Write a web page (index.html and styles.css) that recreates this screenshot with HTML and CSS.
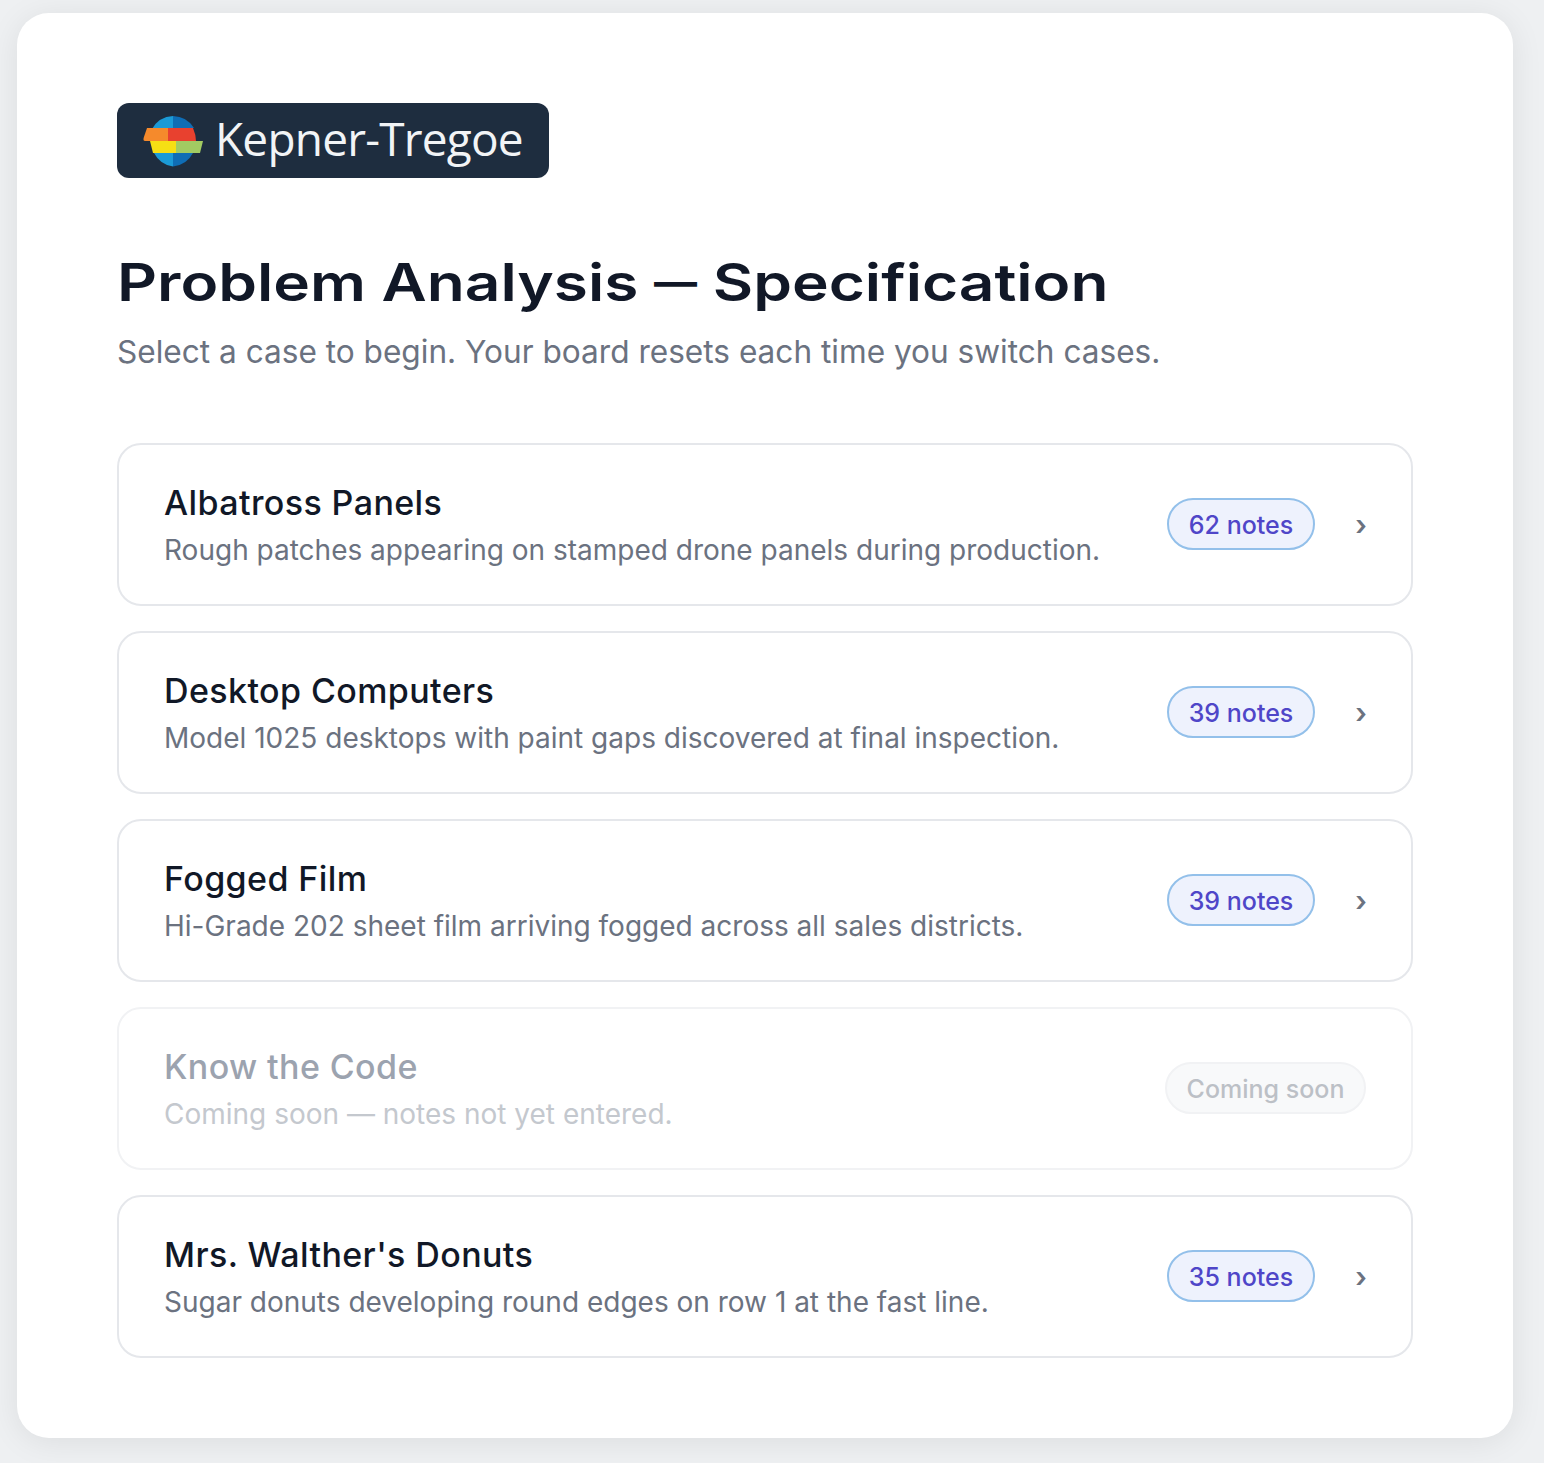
FILE: index.html
```html
<!DOCTYPE html>
<html lang="en">
<head>
    <meta charset="UTF-8">
    <title>Problem Analysis - Specification</title>
    <link rel="stylesheet" href="styles.css">
</head>
<body>
    <main class="panel">
        <div class="logo">
            <svg class="logo-mark" viewBox="0 0 60 52" width="60" height="52">
                <path d="M9 14 A25.5 25.5 0 0 1 30 1 V14 Z" fill="#1b9ad6"/>
                <path d="M30 1 A25.5 25.5 0 0 1 51 13 H30 Z" fill="#0f6db5"/>
                <path d="M11 38 H30 V51.5 A25.5 25.5 0 0 1 11 38 Z" fill="#1b9ad6"/>
                <path d="M30 38 H50 A25.5 25.5 0 0 1 30 51.5 Z" fill="#0f6db5"/>
                <path d="M4 13 H25 V26 H2 Q0 26 0.6 23 Z" fill="#f58a2c"/>
                <path d="M25 13 H50 Q53 20 53 26 H25 Z" fill="#e8412f"/>
                <path d="M7 26 H33 V38 H10 Z" fill="#f6df14"/>
                <path d="M33 26 H60 L57 38 H33 Z" fill="#a2cb62"/>
            </svg>
            <span class="logo-text">Kepner-Tregoe</span>
        </div>

        <h1>Problem Analysis <span class="dash">—</span> Specification</h1>
        <p class="subtitle">Select a case to begin. Your board resets each time you switch cases.</p>

        <div class="cases">
            <div class="case">
                <div class="case-info">
                    <div class="case-title">Albatross Panels</div>
                    <div class="case-desc">Rough patches appearing on stamped drone panels during production.</div>
                </div>
                <span class="badge">62 notes</span>
                <span class="arrow">›</span>
            </div>
            <div class="case">
                <div class="case-info">
                    <div class="case-title">Desktop Computers</div>
                    <div class="case-desc">Model 1025 desktops with paint gaps discovered at final inspection.</div>
                </div>
                <span class="badge">39 notes</span>
                <span class="arrow">›</span>
            </div>
            <div class="case">
                <div class="case-info">
                    <div class="case-title">Fogged Film</div>
                    <div class="case-desc">Hi-Grade 202 sheet film arriving fogged across all sales districts.</div>
                </div>
                <span class="badge">39 notes</span>
                <span class="arrow">›</span>
            </div>
            <div class="case disabled">
                <div class="case-info">
                    <div class="case-title">Know the Code</div>
                    <div class="case-desc">Coming soon — notes not yet entered.</div>
                </div>
                <span class="badge soon">Coming soon</span>
            </div>
            <div class="case">
                <div class="case-info">
                    <div class="case-title">Mrs. Walther's Donuts</div>
                    <div class="case-desc">Sugar donuts developing round edges on row 1 at the fast line.</div>
                </div>
                <span class="badge">35 notes</span>
                <span class="arrow">›</span>
            </div>
        </div>
    </main>
</body>
</html>
```

FILE: styles.css
```css
* {
    margin: 0;
    padding: 0;
    box-sizing: border-box;
}

html,
body {
    height: 100%;
    overflow: hidden;
}

body {
    background: #eef0f2;
    font-family: Inter, "Noto Sans", sans-serif;
    padding: 13px 31px 25px 17px;
}

.panel {
    height: 1425px;
    padding: 90px 100px 0;
    background: #fff;
    border-radius: 32px;
    box-shadow: 0 4px 32px rgba(0, 0, 0, 0.08);
}

.logo {
    display: flex;
    align-items: center;
    width: 432px;
    height: 75px;
    padding-left: 26px;
    gap: 12px;
    background: #1e2d3f;
    border-radius: 12px;
}

.logo-mark {
    flex-shrink: 0;
}

.logo-text {
    padding-bottom: 6px;
    color: #f2f4f6;
    font-family: "Open Sans", sans-serif;
    font-size: 46px;
    letter-spacing: -0.8px;
    white-space: nowrap;
}

h1 {
    width: fit-content;
    height: 64px;
    margin-top: 72px;
    font-size: 52px;
    font-weight: 600;
    line-height: 64px;
    color: #111827;
    white-space: nowrap;
    transform: scaleX(1.195);
    transform-origin: left;
}

.dash {
    font-size: 36px;
    font-weight: 800;
    vertical-align: 6px;
}

.subtitle {
    margin-top: 17px;
    font-size: 31.6px;
    line-height: 42px;
    color: #6b7280;
    white-space: nowrap;
}

.cases {
    display: flex;
    flex-direction: column;
    gap: 25px;
    margin-top: 70px;
}

.case {
    display: flex;
    align-items: center;
    height: 163px;
    padding: 0 46px 0 45px;
    background: #fff;
    border: 2px solid #e5e7eb;
    border-radius: 24px;
}

.case-info {
    flex-grow: 1;
    padding: 1px 0 0;
}

.case-title {
    font-size: 34px;
    font-weight: 500;
    line-height: 44px;
    letter-spacing: 0.4px;
    color: #111827;
}

.case-desc {
    margin-top: 5px;
    font-size: 28px;
    line-height: 40px;
    color: #6b7280;
    white-space: nowrap;
}

.badge {
    display: flex;
    align-items: center;
    justify-content: center;
    width: 148px;
    height: 52px;
    margin-bottom: 1px;
    padding-top: 1px;
    font-size: 25px;
    font-weight: 500;
    color: #4f46c8;
    background: #eef2fd;
    border: 2px solid #93c0ea;
    border-radius: 26px;
    white-space: nowrap;
}

.arrow {
    width: 52px;
    margin-right: -2px;
    text-align: right;
    font-size: 28px;
    font-weight: 600;
    color: #6b7280;
}

.disabled {
    border-color: #f1f2f4;
}

.disabled .case-title {
    color: #9ca3af;
}

.disabled .case-desc {
    color: #c4c8ce;
}

.soon {
    width: 201px;
    margin-right: -1px;
    color: #bcc0c6;
    background: #f8f9fa;
    border-color: #f1f2f4;
}
```
